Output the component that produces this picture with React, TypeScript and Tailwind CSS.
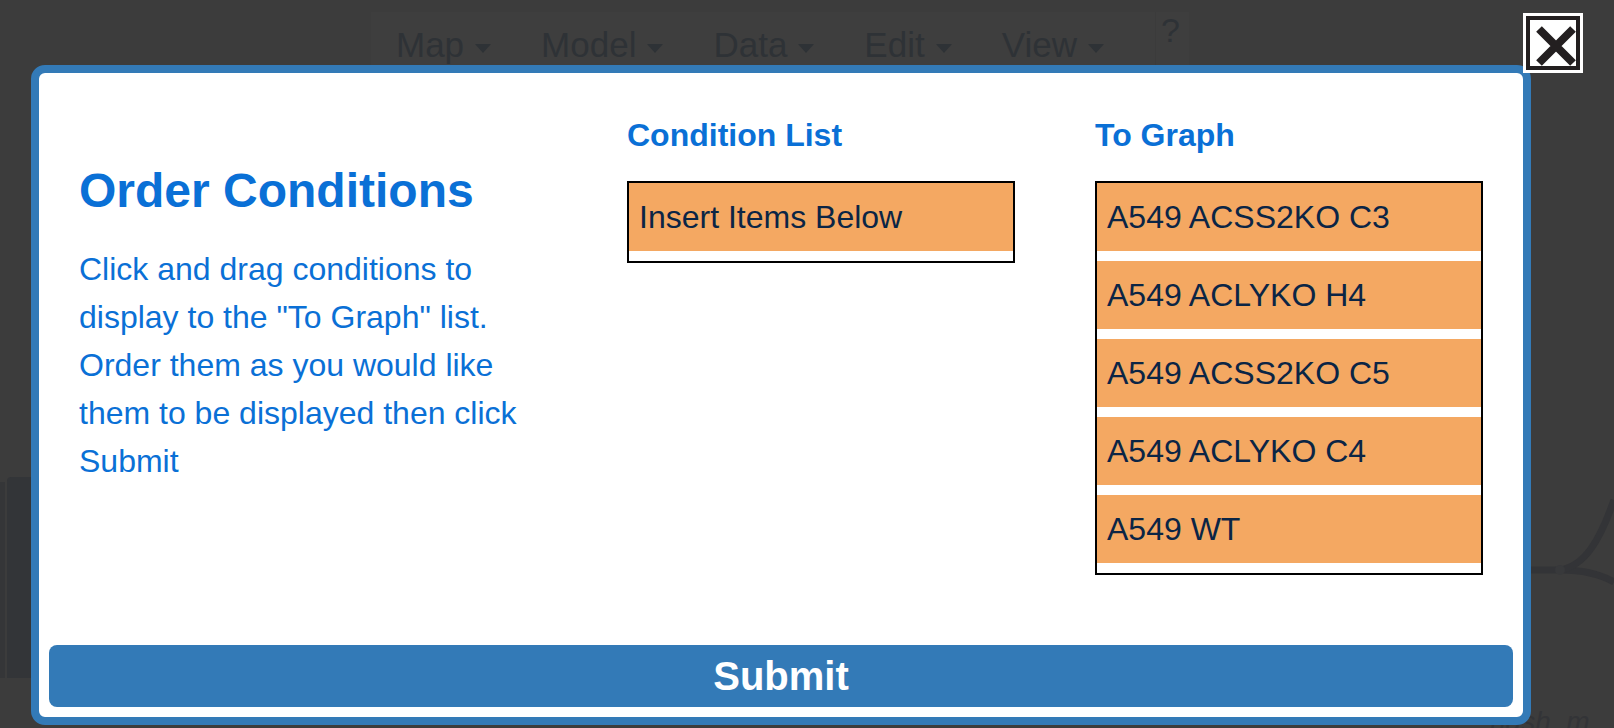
import React from 'react';

const menus = ['Map', 'Model', 'Data', 'Edit', 'View'];
const toGraph = ['A549 ACSS2KO C3', 'A549 ACLYKO H4', 'A549 ACSS2KO C5', 'A549 ACLYKO C4', 'A549 WT'];

const Caret = () => (
  <span className="mt-[6px] h-0 w-0 border-x-[8px] border-t-[9px] border-x-transparent border-t-[#2e3236]" />
);

const ListItem = ({ label }: { label: string }) => (
  <div className="mb-[10px] bg-[#f4a862] px-[10px] py-4 text-[32px] leading-[36px] text-[#0b2545]">{label}</div>
);

// dimmed app that sits behind the overlay
const Backdrop = () => (
  <div className="pointer-events-none absolute inset-0">
    <div className="absolute left-[371px] top-[12px] flex h-[55px] w-[818px] bg-[#3e3e3e]">
      <div className="flex items-start gap-[50px] pl-[25px] pt-[13px] text-[35px] leading-[40px] text-[#2e3236]">
        {menus.map((m) => (
          <span key={m} className="flex items-center gap-[11px]">
            {m}
            <Caret />
          </span>
        ))}
      </div>
      <div className="ml-auto w-[34px] border-l border-[#3b3b3b] pl-[5px] text-[34px] leading-[40px] text-[#2e3236]">
        <span className="relative -top-[2px]">?</span>
      </div>
    </div>
    <div className="absolute left-0 top-[482px] h-[196px] w-[5px] bg-[#353638]" />
    <div className="absolute left-[7px] top-[477px] h-[201px] w-[40px] rounded-t-[4px] bg-[#333538]" />
    <svg className="absolute left-[1500px] top-[470px]" width="114" height="140" viewBox="0 0 114 140">
      <path d="M0 100 L60 100 C80 100 100 104 114 112" fill="none" stroke="#333437" strokeWidth="7" />
      <path d="M60 100 C85 96 100 70 114 30" fill="none" stroke="#333437" strokeWidth="7" />
      <circle cx="60" cy="100" r="5" fill="#38393b" />
    </svg>
    <span className="absolute left-[1490px] top-[706px] text-[28px] italic leading-[32px] text-[#333437]">nash_m</span>
  </div>
);

export default function App() {
  return (
    <div className="relative h-[728px] w-[1614px] overflow-hidden bg-[#3c3c3c] font-['Liberation_Sans',Arial,sans-serif]">
      <Backdrop />

      <div className="relative pl-[31px] pt-[65px]">
        <div className="flex h-[660px] w-[1500px] flex-col rounded-[14px] border-8 border-[#337ab7] bg-white">
          <div className="grid grid-cols-[1fr_388px_388px] gap-x-[80px] px-[40px] pt-[44px]">
            <div className="pt-[46px] text-[#0a70d6]">
              <h1 className="text-[48px] font-bold leading-[55px]">Order Conditions</h1>
              <p className="mt-[27px] text-[32px] leading-[48px]">
                Click and drag conditions to display to the "To Graph" list. Order them as you would like them to be
                displayed then click Submit
              </p>
            </div>
            <div>
              <h3 className="text-[32px] font-bold leading-[37px] text-[#0a70d6]">Condition List</h3>
              <div className="mt-[27px] border-2 border-black">
                <ListItem label="Insert Items Below" />
              </div>
            </div>
            <div>
              <h3 className="text-[32px] font-bold leading-[37px] text-[#0a70d6]">To Graph</h3>
              <div className="mt-[27px] border-2 border-black">
                {toGraph.map((t) => (
                  <ListItem key={t} label={t} />
                ))}
              </div>
            </div>
          </div>
          <button className="mx-[10px] mb-[10px] mt-auto h-[62px] rounded-lg bg-[#337ab7] text-[40px] font-bold text-white">
            Submit
          </button>
        </div>
      </div>

      {/* close box */}
      <div className="absolute left-[1523px] top-[13px] h-[60px] w-[60px] bg-white p-[3px]">
        <div className="h-full w-full border-4 border-[#231f20]">
          <svg width="46" height="46" viewBox="4 4 46 46">
            <path d="M13 13 L47 47 M47 13 L13 47" stroke="#231f20" strokeWidth="8" />
          </svg>
        </div>
      </div>
    </div>
  );
}
